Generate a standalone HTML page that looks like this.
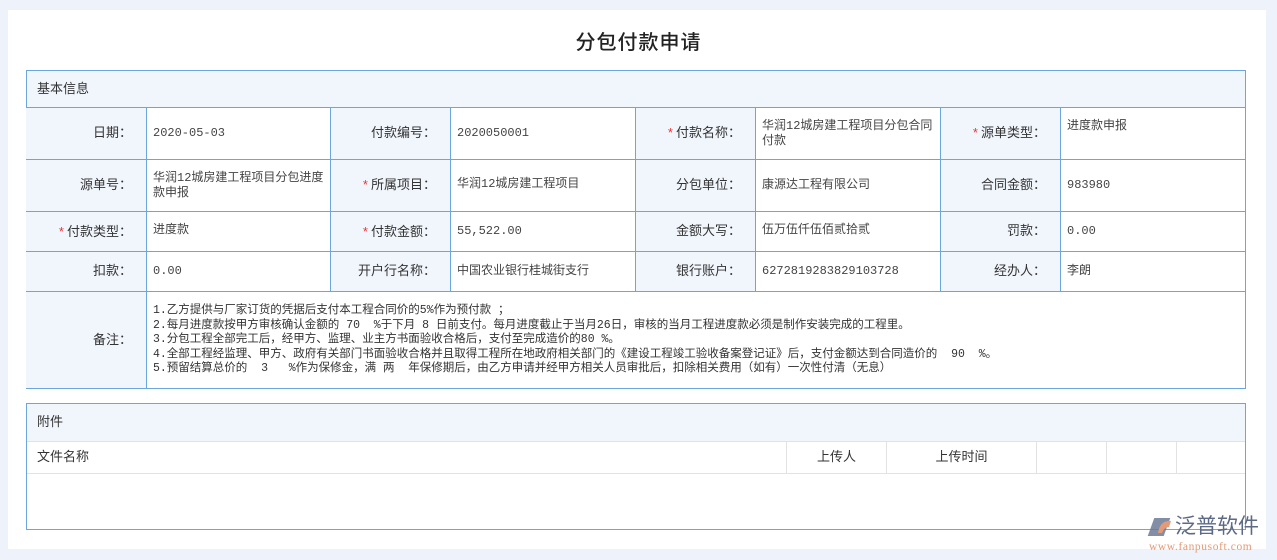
<!DOCTYPE html>
<html><head><meta charset="utf-8"><style>
*{margin:0;padding:0;box-sizing:border-box}
body{width:1277px;height:560px;background:#eef3fb;font-family:"Liberation Sans","Noto Sans CJK SC",sans-serif;color:#333;position:relative;overflow:hidden}
.panel{position:absolute;left:8px;top:10px;width:1258px;height:539px;background:#fff}
.title{position:absolute;left:0;top:26px;width:1277px;text-align:center;font-size:20px;color:#222;font-weight:500;letter-spacing:1px}
.box{position:absolute;left:26px;width:1220px;border:1px solid #6ba6dc}
.hd{height:37px;background:#f1f6fd;font-size:13px;line-height:36px;padding-left:10px;color:#333}
.c{position:absolute;border-left:1px solid #6ba6dc;border-top:1px solid #6ba6dc;font-size:12px}
.l{background:#f1f6fd;text-align:right;padding-right:14px;font-size:13px}
.v{background:#fff;padding-left:6px;color:#444;font-family:"Liberation Mono","Noto Sans CJK SC",monospace;font-size:12px}
.s{color:#e33;font-size:13px;margin-right:3px}
.rm{line-height:14.5px;color:#333;white-space:pre-wrap;font-size:11.5px}
.at{position:absolute;border-left:1px solid #e2e2e2;border-top:1px solid #e2e2e2;font-size:13px;line-height:32px}
</style></head><body>
<div class="panel"></div>
<div class="title">分包付款申请</div>
<div class="box" style="top:70px;height:319px">
<div class="hd">基本信息</div>
</div>
<div style="position:absolute;left:26px;top:70px">
<div class="c l" style="left:0;top:37px;width:120px;height:52px;border-left:none;line-height:50px">日期：</div>
<div class="c v" style="left:120px;top:37px;width:184px;height:52px;line-height:50px">2020-05-03</div>
<div class="c l" style="left:304px;top:37px;width:120px;height:52px;line-height:50px">付款编号：</div>
<div class="c v" style="left:424px;top:37px;width:185px;height:52px;line-height:50px">2020050001</div>
<div class="c l" style="left:609px;top:37px;width:120px;height:52px;line-height:50px"><span class="s">*</span>付款名称：</div>
<div class="c v" style="left:729px;top:37px;width:185px;height:52px;padding-top:11px;padding-right:6px;line-height:15px">华润12城房建工程项目分包合同付款</div>
<div class="c l" style="left:914px;top:37px;width:120px;height:52px;line-height:50px"><span class="s">*</span>源单类型：</div>
<div class="c v" style="left:1034px;top:37px;width:185px;height:52px;padding-top:11px;line-height:15px">进度款申报</div>
<div class="c l" style="left:0;top:89px;width:120px;height:52px;border-left:none;line-height:50px">源单号：</div>
<div class="c v" style="left:120px;top:89px;width:184px;height:52px;padding-top:11px;padding-right:6px;line-height:15px">华润12城房建工程项目分包进度款申报</div>
<div class="c l" style="left:304px;top:89px;width:120px;height:52px;line-height:50px"><span class="s">*</span>所属项目：</div>
<div class="c v" style="left:424px;top:89px;width:185px;height:52px;padding-top:17px;line-height:15px">华润12城房建工程项目</div>
<div class="c l" style="left:609px;top:89px;width:120px;height:52px;line-height:50px">分包单位：</div>
<div class="c v" style="left:729px;top:89px;width:185px;height:52px;line-height:50px">康源达工程有限公司</div>
<div class="c l" style="left:914px;top:89px;width:120px;height:52px;line-height:50px">合同金额：</div>
<div class="c v" style="left:1034px;top:89px;width:185px;height:52px;line-height:50px">983980</div>
<div class="c l" style="left:0;top:141px;width:120px;height:40px;border-left:none;line-height:40px"><span class="s">*</span>付款类型：</div>
<div class="c v" style="left:120px;top:141px;width:184px;height:40px;line-height:36px">进度款</div>
<div class="c l" style="left:304px;top:141px;width:120px;height:40px;line-height:40px"><span class="s">*</span>付款金额：</div>
<div class="c v" style="left:424px;top:141px;width:185px;height:40px;line-height:38px">55,522.00</div>
<div class="c l" style="left:609px;top:141px;width:120px;height:40px;line-height:38px">金额大写：</div>
<div class="c v" style="left:729px;top:141px;width:185px;height:40px;line-height:36px">伍万伍仟伍佰贰拾贰</div>
<div class="c l" style="left:914px;top:141px;width:120px;height:40px;line-height:38px">罚款：</div>
<div class="c v" style="left:1034px;top:141px;width:185px;height:40px;line-height:38px">0.00</div>
<div class="c l" style="left:0;top:181px;width:120px;height:40px;border-left:none;line-height:38px">扣款：</div>
<div class="c v" style="left:120px;top:181px;width:184px;height:40px;line-height:38px">0.00</div>
<div class="c l" style="left:304px;top:181px;width:120px;height:40px;line-height:38px">开户行名称：</div>
<div class="c v" style="left:424px;top:181px;width:185px;height:40px;line-height:38px">中国农业银行桂城街支行</div>
<div class="c l" style="left:609px;top:181px;width:120px;height:40px;line-height:38px">银行账户：</div>
<div class="c v" style="left:729px;top:181px;width:185px;height:40px;line-height:38px">6272819283829103728</div>
<div class="c l" style="left:914px;top:181px;width:120px;height:40px;line-height:38px">经办人：</div>
<div class="c v" style="left:1034px;top:181px;width:185px;height:40px;line-height:38px">李朗</div>
<div class="c l" style="left:0;top:221px;width:120px;height:97px;border-left:none;line-height:95px">备注：</div>
<div class="c v rm" style="left:120px;top:221px;width:1099px;height:97px;padding-top:12px">1.乙方提供与厂家订货的凭据后支付本工程合同价的5%作为预付款 ；
2.每月进度款按甲方审核确认金额的 70  %于下月 8 日前支付。每月进度截止于当月26日，审核的当月工程进度款必须是制作安装完成的工程里。
3.分包工程全部完工后，经甲方、监理、业主方书面验收合格后，支付至完成造价的80 %。
4.全部工程经监理、甲方、政府有关部门书面验收合格并且取得工程所在地政府相关部门的《建设工程竣工验收备案登记证》后，支付金额达到合同造价的  90  %。
5.预留结算总价的  3   %作为保修金，满 两  年保修期后，由乙方申请并经甲方相关人员审批后，扣除相关费用（如有）一次性付清（无息）</div>
</div>

<div class="box" style="top:403px;height:127px">
<div class="hd">附件</div>
<div style="position:relative;height:33px;border-top:1px solid #e2e2e2;border-bottom:1px solid #e2e2e2">
<div class="at" style="left:0;top:-1px;width:759px;height:33px;border-left:none;border-top:none;padding-left:10px">文件名称</div>
<div class="at" style="left:759px;top:-1px;width:100px;height:33px;border-top:none;text-align:center">上传人</div>
<div class="at" style="left:859px;top:-1px;width:150px;height:33px;border-top:none;text-align:center">上传时间</div>
<div class="at" style="left:1009px;top:-1px;width:70px;height:33px;border-top:none"></div>
<div class="at" style="left:1079px;top:-1px;width:70px;height:33px;border-top:none"></div>
<div class="at" style="left:1149px;top:-1px;width:70px;height:33px;border-top:none"></div>
</div>
</div>

<div style="position:absolute;left:1151px;top:518px;width:16px;height:18px;background:#6c7a96;transform:skewX(-20deg);opacity:.85"></div>
<svg style="position:absolute;left:1156px;top:518px" width="16" height="16"><path d="M2 15 Q4 2 15 3 L13 9 Q8 9 6 15Z" fill="#e39a76"/></svg>
<div style="position:absolute;left:1175px;top:514px;font-size:21px;color:#5d6a85;line-height:26px">泛普软件</div>
<div style="position:absolute;left:1149px;top:541px;font-size:11.5px;color:#e39a76;font-family:'Liberation Serif',serif;letter-spacing:0.6px;line-height:12px">www.fanpusoft.com</div>
</body></html>
